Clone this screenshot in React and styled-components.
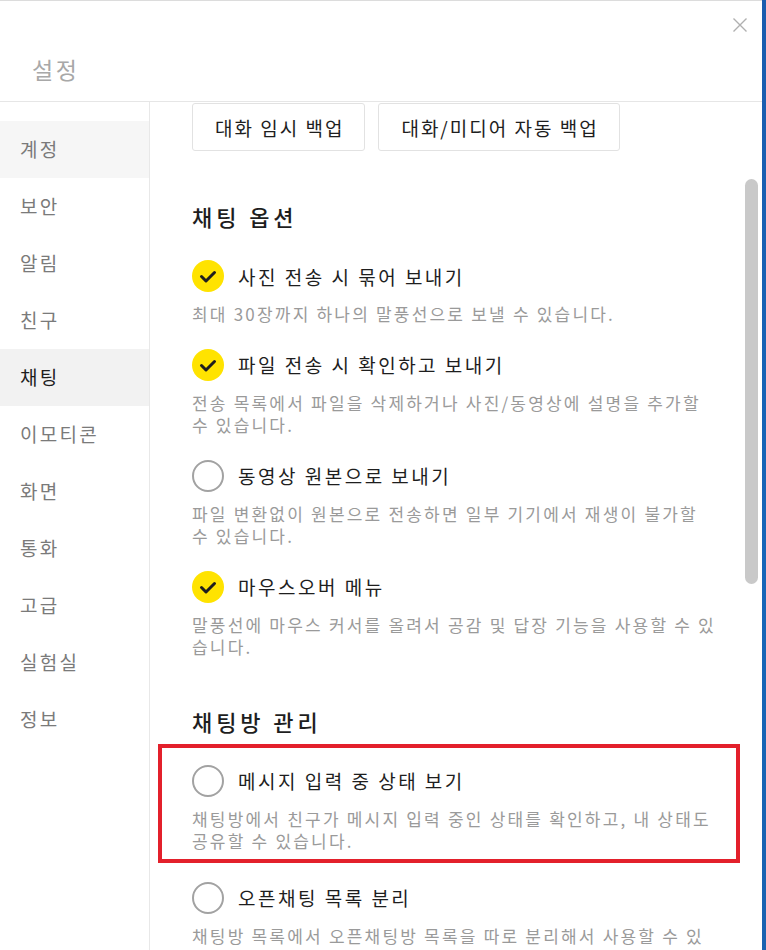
import React from "react";
import styled, { createGlobalStyle } from "styled-components";

const menu = ["계정", "보안", "알림", "친구", "채팅", "이모티콘", "화면", "통화", "고급", "실험실", "정보"];

// descriptions are kept as the lines the desktop client shows
const chatOptions = [
  { title: "사진 전송 시 묶어 보내기", desc: ["최대 30장까지 하나의 말풍선으로 보낼 수 있습니다."], on: true },
  { title: "파일 전송 시 확인하고 보내기", desc: ["전송 목록에서 파일을 삭제하거나 사진/동영상에 설명을 추가할", "수 있습니다."], on: true },
  { title: "동영상 원본으로 보내기", desc: ["파일 변환없이 원본으로 전송하면 일부 기기에서 재생이 불가할", "수 있습니다."], on: false },
  { title: "마우스오버 메뉴", desc: ["말풍선에 마우스 커서를 올려서 공감 및 답장 기능을 사용할 수 있", "습니다."], on: true },
];

const roomOptions = [
  { title: "메시지 입력 중 상태 보기", desc: ["채팅방에서 친구가 메시지 입력 중인 상태를 확인하고, 내 상태도", "공유할 수 있습니다."], on: false, marked: true },
  { title: "오픈채팅 목록 분리", desc: ["채팅방 목록에서 오픈채팅방 목록을 따로 분리해서 사용할 수 있", "습니다."], on: false },
];

export default function App() {
  return (
    <Screen>
      <GlobalStyle />
      <Window>
        <Header>
          <Title>설정</Title>
          <Close aria-label="닫기">
            <svg width="16" height="16" viewBox="0 0 16 16">
              <path d="M1.5 1.5 L14.5 14.5 M14.5 1.5 L1.5 14.5" stroke="#b0b0b0" strokeWidth="1.4" fill="none" />
            </svg>
          </Close>
        </Header>
        <Body>
          <Sidebar>
            {menu.map((name) => (
              <MenuItem key={name} $active={name === "채팅"} $hover={name === "계정"}>
                {name}
              </MenuItem>
            ))}
          </Sidebar>
          <Content>
            <ButtonRow>
              <Btn>대화 임시 백업</Btn>
              <Btn>대화/미디어 자동 백업</Btn>
            </ButtonRow>
            <Section>
              <Heading>채팅 옵션</Heading>
              {chatOptions.map((o) => (
                <Option key={o.title} {...o} />
              ))}
            </Section>
            <Section>
              <Heading>채팅방 관리</Heading>
              {roomOptions.map((o) => (
                <Option key={o.title} {...o} />
              ))}
            </Section>
            <Thumb />
          </Content>
        </Body>
      </Window>
      <Desktop />
    </Screen>
  );
}

function Option({ title, desc, on, marked }) {
  return (
    <Item $marked={marked}>
      <TitleRow>
        <Check $on={on}>
          {on && (
            <svg width="32" height="32" viewBox="0 0 32 32">
              <path d="M9.5 16.5 L14 21 L22.5 12.5" stroke="#1e1e1e" strokeWidth="3" fill="none" strokeLinecap="round" strokeLinejoin="round" />
            </svg>
          )}
        </Check>
        <ItemTitle>{title}</ItemTitle>
      </TitleRow>
      <Desc>
        {desc.map((line) => (
          <Line key={line}>{line}</Line>
        ))}
      </Desc>
    </Item>
  );
}

const GlobalStyle = createGlobalStyle`
  html, body {
    margin: 0;
    padding: 0;
    background: #fff;
  }
  body {
    font-family: "Noto Sans CJK KR", "Noto Sans", sans-serif;
  }
`;

const Screen = styled.div`
  display: flex;
  width: 766px;
  height: 950px;
  overflow: hidden;
`;

const Window = styled.div`
  width: 762px;
  flex-shrink: 0;
  display: flex;
  flex-direction: column;
  border-top: 1px solid #dcdcdc;
  background: #fff;
`;

const Desktop = styled.div`
  flex: 1;
  background: linear-gradient(180deg, #1b5cae 0%, #1766b8 60%, #1a62b0 100%);
`;

const Header = styled.div`
  height: 100px;
  border-bottom: 1px solid #e6e6e6;
  display: flex;
  justify-content: space-between;
  align-items: flex-start;
  padding: 0 14px 0 32px;
`;

const Title = styled.h1`
  margin: 51px 0 0;
  font-size: 23px;
  font-weight: 400;
  color: #a8a8a8;
  letter-spacing: 2.6px;
`;

const Close = styled.div`
  margin-top: 13px;
  width: 16px;
  height: 16px;
`;

const Body = styled.div`
  flex: 1;
  display: flex;
  min-height: 0;
`;

const Sidebar = styled.nav`
  width: 149px;
  flex-shrink: 0;
  border-right: 1px solid #e8e8e8;
  padding-top: 19px;
`;

const MenuItem = styled.div`
  height: 57px;
  display: flex;
  align-items: center;
  padding: 0 0 3px 20px;
  box-sizing: border-box;
  font-size: 19px;
  letter-spacing: 2.3px;
  color: ${(p) => (p.$active ? "#1e1e1e" : "#7a7a7a")};
  background: ${(p) => (p.$active ? "#f2f2f2" : p.$hover ? "#f6f6f6" : "transparent")};
`;

const Content = styled.main`
  position: relative;
  flex: 1;
  padding: 1px 40px 0 42px;
  overflow: hidden;
`;

const Thumb = styled.div`
  position: absolute;
  top: 77px;
  right: 4px;
  width: 13px;
  height: 405px;
  border-radius: 7px;
  background: #c9c9c9;
`;

const ButtonRow = styled.div`
  display: flex;
  gap: 13px;
`;

const Btn = styled.button`
  height: 48px;
  padding: 0 20px 0 22px;
  border: 1px solid #e2e2e2;
  border-radius: 3px;
  background: #fff;
  font-family: inherit;
  font-size: 19px;
  letter-spacing: 2px;
  color: #1e1e1e;
`;

const Section = styled.section`
  margin-top: 50px;

  & + & {
    margin-top: 47px;
  }
`;

const Heading = styled.h2`
  margin: 0 0 29px;
  font-size: 22px;
  line-height: 30px;
  font-weight: 500;
  letter-spacing: 3.9px;
  color: #1e1e1e;
`;

const Item = styled.div`
  position: relative;
  width: 529px;
  margin-bottom: ${(p) => (p.$marked ? "29px" : "23px")};

  &::after {
    content: "";
    display: ${(p) => (p.$marked ? "block" : "none")};
    position: absolute;
    left: -34px;
    right: -19px;
    top: -21px;
    bottom: -10px;
    border: 4px solid #e3202b;
  }
`;

const TitleRow = styled.div`
  display: flex;
  align-items: center;
  gap: 14px;
  height: 32px;
`;

const Check = styled.div`
  width: 32px;
  height: 32px;
  box-sizing: border-box;
  border-radius: 50%;
  flex-shrink: 0;
  background: ${(p) => (p.$on ? "#ffe300" : "#fff")};
  border: ${(p) => (p.$on ? "none" : "2px solid #a2a2a2")};
`;

const ItemTitle = styled.span`
  font-size: 19px;
  letter-spacing: 2.5px;
  color: #1e1e1e;
`;

const Desc = styled.p`
  margin: 11px 0 0;
  font-size: 17px;
  line-height: 22.5px;
  letter-spacing: 2.2px;
  color: #9a9a9a;
`;

const Line = styled.span`
  display: block;
  white-space: nowrap;
`;
